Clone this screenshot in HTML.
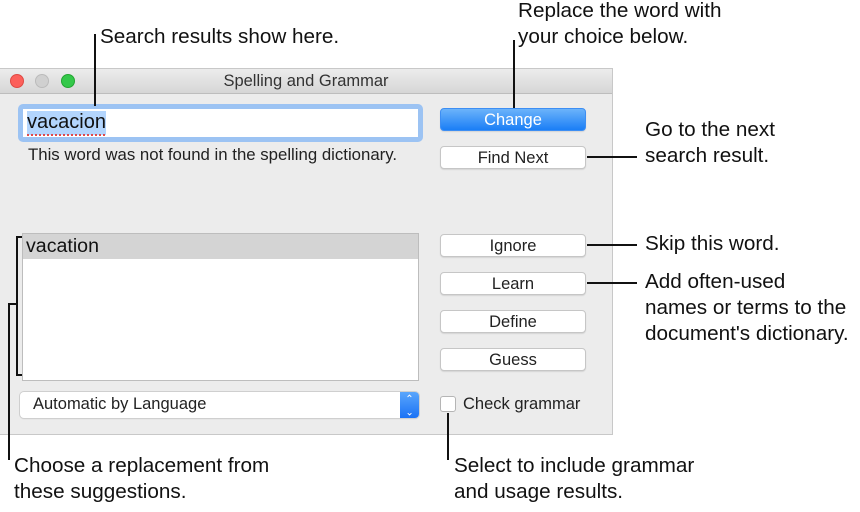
<!DOCTYPE html>
<html><head><style>
body{margin:0;width:860px;height:512px;background:#fff;position:relative;overflow:hidden;font-family:"Liberation Sans",sans-serif;}
.a{position:absolute;font-size:20.7px;color:#111;line-height:26px;white-space:nowrap}
.l{position:absolute;background:#111}
.win{position:absolute;left:0;top:68px;width:613px;height:367px;background:#ececec;border:1px solid #c8c8c8;border-left:none;box-sizing:border-box}
.tb{position:absolute;left:0;top:0;right:0;height:24px;background:linear-gradient(#ececec,#d6d6d6);border-bottom:1px solid #bdbdbd;text-align:center;font-size:16.5px;line-height:24px;color:#333}
.dot{position:absolute;top:5px;width:14px;height:14px;border-radius:50%}
.btn{position:absolute;left:440px;width:146px;height:23px;background:#fff;border:1px solid #c6c6c6;border-radius:4px;box-sizing:border-box;text-align:center;font-size:16.5px;line-height:22px;color:#222;box-shadow:0 1px 1px rgba(0,0,0,.1)}
.s{position:absolute;font-size:16.5px;color:#222;white-space:nowrap}
</style></head><body>
<div class="win">
<div class="tb">Spelling and Grammar
<div class="dot" style="left:10px;background:#fc605b;border:1px solid #de4a43;box-sizing:border-box"></div>
<div class="dot" style="left:35px;background:#d0d0d0;border:1px solid #bbb;box-sizing:border-box"></div>
<div class="dot" style="left:61px;background:#34c84a;border:1px solid #23a532;box-sizing:border-box"></div>
</div>
</div>
<div style="position:absolute;left:18px;top:104px;width:405px;height:38px;background:#9cc3f3;border-radius:5px"></div>
<div style="position:absolute;left:23px;top:109px;width:395px;height:28px;background:#fff"></div>
<div style="position:absolute;left:27px;top:111px;width:79px;height:24px;background:#b3d5fd"></div>
<div class="s" style="left:27px;top:110px;font-size:20px;line-height:24px;color:#111">vacacion</div>
<div style="position:absolute;left:27px;top:134px;width:78px;border-top:2px dotted #e04a4a"></div>
<div class="s" style="left:28px;top:145px;font-size:16.8px">This word was not found in the spelling dictionary.</div>
<div style="position:absolute;left:22px;top:233px;width:397px;height:148px;background:#fff;border:1px solid #bdbdbd;box-sizing:border-box"></div>
<div style="position:absolute;left:23px;top:234px;width:395px;height:25px;background:#d4d4d4"></div>
<div class="s" style="left:26px;top:235px;font-size:19.6px;color:#111">vacation</div>
<div style="position:absolute;left:20px;top:392px;width:399px;height:26px;background:#fff;border-radius:4px;box-shadow:0 0 0 1px #cfcfcf,0 1px 1px rgba(0,0,0,.15)"></div>
<div style="position:absolute;left:400px;top:392px;width:19px;height:26px;background:linear-gradient(#5aa6fc,#1a72f5);border-radius:0 4px 4px 0;color:#fff;font-size:10px;line-height:11px;text-align:center"><div style="padding-top:2px">&#8963;</div><div style="transform:rotate(180deg)">&#8963;</div></div>
<div class="s" style="left:33px;top:395px">Automatic by Language</div>
<div style="position:absolute;left:440px;top:396px;width:16px;height:16px;background:#fff;border:1px solid #b5b5b5;border-radius:3px;box-sizing:border-box"></div>
<div class="s" style="left:463px;top:395px">Check grammar</div>
<div class="btn" style="top:108px;background:linear-gradient(#6cb3fa,#1a7ef6);border-color:#3d8ef3;color:#fff">Change</div>
<div class="btn" style="top:146px">Find Next</div>
<div class="btn" style="top:234px">Ignore</div>
<div class="btn" style="top:272px">Learn</div>
<div class="btn" style="top:310px">Define</div>
<div class="btn" style="top:348px">Guess</div>

<div class="a" style="left:100px;top:24px">Search results show here.</div>
<div class="l" style="left:94px;top:34px;width:2px;height:72px"></div>
<div class="a" style="left:518px;top:-2px">Replace the word with<br>your choice below.</div>
<div class="l" style="left:513px;top:40px;width:2px;height:68px"></div>
<div class="a" style="left:645px;top:117px">Go to the next<br>search result.</div>
<div class="l" style="left:587px;top:156px;width:50px;height:2px"></div>
<div class="a" style="left:645px;top:231px">Skip this word.</div>
<div class="l" style="left:587px;top:244px;width:50px;height:2px"></div>
<div class="a" style="left:645px;top:269px">Add often-used<br>names or terms to the<br>document's dictionary.</div>
<div class="l" style="left:587px;top:282px;width:50px;height:2px"></div>
<div class="a" style="left:14px;top:453px">Choose a replacement from<br>these suggestions.</div>
<div class="l" style="left:16px;top:236px;width:2px;height:140px"></div>
<div class="l" style="left:16px;top:236px;width:6px;height:2px"></div>
<div class="l" style="left:16px;top:374px;width:6px;height:2px"></div>
<div class="l" style="left:8px;top:303px;width:9px;height:2px"></div>
<div class="l" style="left:8px;top:303px;width:2px;height:157px"></div>
<div class="a" style="left:454px;top:453px">Select to include grammar<br>and usage results.</div>
<div class="l" style="left:447px;top:413px;width:2px;height:47px"></div>
</body></html>
